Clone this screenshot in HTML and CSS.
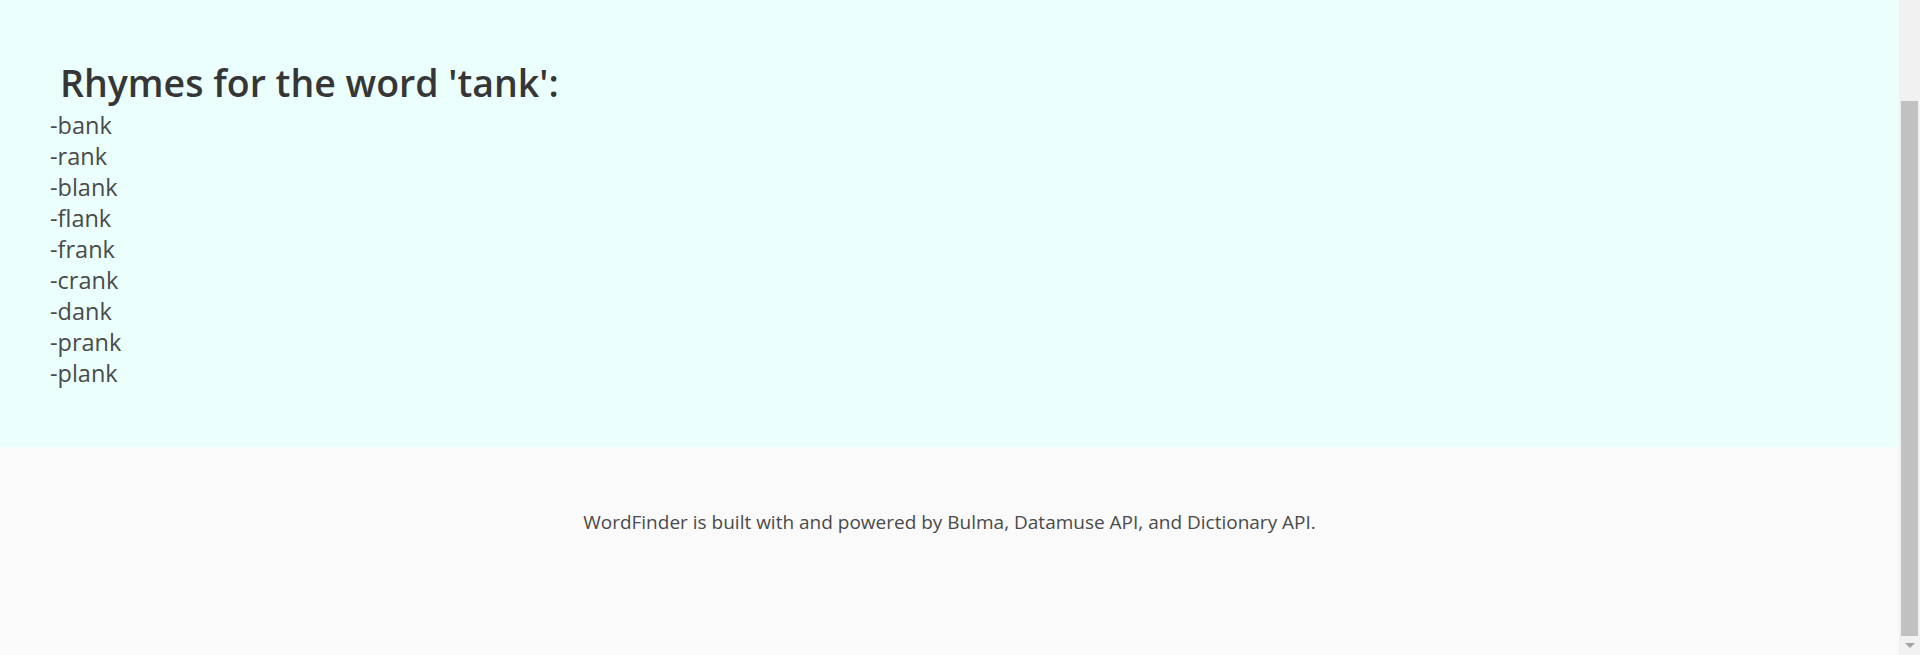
FILE: index.html
```html
<!DOCTYPE html>
<html lang="en">
<head>
<meta charset="utf-8">
<title>WordFinder</title>
<link rel="stylesheet" href="styles.css">
</head>
<body>
<div class="window">
  <div class="main">
    <section class="hero">
      <h1 class="title">Rhymes for the word 'tank':</h1>
      <ul class="rhymes">
        <li>-bank</li>
        <li>-rank</li>
        <li>-blank</li>
        <li>-flank</li>
        <li>-frank</li>
        <li>-crank</li>
        <li>-dank</li>
        <li>-prank</li>
        <li>-plank</li>
      </ul>
    </section>
    <footer class="footer">
      <p>WordFinder is built with and powered by Bulma, Datamuse API, and Dictionary API.</p>
    </footer>
  </div>
  <div class="scrollbar" aria-hidden="true">
    <div class="scrollbar-thumb"></div>
    <div class="scrollbar-button">
      <span class="scrollbar-arrow"></span>
    </div>
  </div>
</div>
</body>
</html>
```

FILE: styles.css
```css
html, body {
  margin: 0;
  padding: 0;
  height: 100%;
  overflow: hidden;
}

body {
  font-family: "Open Sans", "Noto Sans", sans-serif;
  color: #4a4a4a;
}

.window {
  display: flex;
  height: 100vh;
}

.main {
  flex: 1;
  min-width: 0;
  display: flex;
  flex-direction: column;
}

.hero {
  flex: none;
  height: 447px;
  box-sizing: border-box;
  background: #ebfffd;
  padding: 60px 30px 0 50px;
}

.title {
  margin: 0 0 5px 0;
  padding-left: 10px;
  font-size: 37.5px;
  font-weight: 600;
  line-height: 45px;
  color: #363636;
}

.rhymes {
  list-style: none;
  margin: 0;
  padding: 0;
  font-size: 23.5px;
  line-height: 31px;
}

.footer {
  flex: 1;
  background: #fafafa;
  padding: 60px 30px 0;
  text-align: center;
}

.footer p {
  margin: 0;
  font-size: 19px;
  line-height: 30px;
}

.scrollbar {
  flex: none;
  width: 21px;
  display: flex;
  flex-direction: column;
  background: #f1f1f1;
  padding-top: 101px;
  box-sizing: border-box;
}

.scrollbar-thumb {
  flex: none;
  height: 535px;
  margin: 0 2px;
  background: #c1c1c1;
}

.scrollbar-button {
  flex: 1;
  display: flex;
  align-items: center;
  justify-content: center;
}

.scrollbar-arrow {
  width: 0;
  height: 0;
  border-left: 5px solid transparent;
  border-right: 5px solid transparent;
  border-top: 5px solid #a3a3a3;
}
```
